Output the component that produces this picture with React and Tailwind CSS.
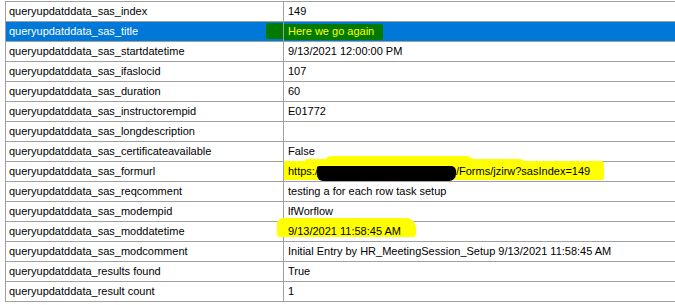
const rows = [
  ["queryupdatddata_sas_index", "149"],
  ["queryupdatddata_sas_title", "Here we go again", "selected"],
  ["queryupdatddata_sas_startdatetime", "9/13/2021 12:00:00 PM"],
  ["queryupdatddata_sas_ifaslocid", "107"],
  ["queryupdatddata_sas_duration", "60"],
  ["queryupdatddata_sas_instructorempid", "E01772"],
  ["queryupdatddata_sas_longdescription", ""],
  ["queryupdatddata_sas_certificateavailable", "False"],
  ["queryupdatddata_sas_formurl", "", "url"],
  ["queryupdatddata_sas_reqcomment", "testing a for each row task setup"],
  ["queryupdatddata_sas_modempid", "lfWorflow"],
  ["queryupdatddata_sas_moddatetime", "9/13/2021 11:58:45 AM", "marked"],
  ["queryupdatddata_sas_modcomment", "Initial Entry by HR_MeetingSession_Setup 9/13/2021 11:58:45 AM"],
  ["queryupdatddata_results found", "True"],
  ["queryupdatddata_result count", "1"],
];

function ValueCell({ value, kind }) {
  if (kind === "selected") {
    return (
      <div className="relative flex h-full items-center pl-[4px]">
        <div className="absolute left-0 top-[2px] h-[16px] w-[99px] rounded-r-[2px] bg-[#007a00]" />
        <span className="relative text-[#ffff00]">{value}</span>
      </div>
    );
  }
  if (kind === "url") {
    return (
      <div className="relative flex h-full items-center pl-[4px]">
        {/* highlighter stroke */}
        <div className="absolute left-0 top-[-1px] h-[19px] w-[320px] rounded-tr-[3px] rounded-br-[2px] bg-[#ffff00]" />
        <div className="absolute left-[40px] top-[-6px] h-[8px] w-[150px] rounded-t-[8px] bg-[#ffff00]" />
        <div className="absolute left-[20px] top-[-3px] h-[4px] w-[220px] rounded-t-[4px] bg-[#ffff00]" />
        <span className="relative">https:/</span>
        <span className="relative -ml-[1px] mt-[4px] h-[15px] w-[139px] rounded-bl-[6px] rounded-tl-[2px] rounded-tr-[5px] rounded-br-[7px] bg-black" />
        <span className="relative">/Forms/jzirw?sasIndex=149</span>
      </div>
    );
  }
  if (kind === "marked") {
    return (
      <div className="relative flex h-full items-center pl-[4px]">
        <div className="absolute left-[-7px] top-[-4px] h-[19px] w-[139px] rounded-tl-[6px] rounded-tr-[10px] rounded-br-[3px] rounded-bl-[2px] bg-[#ffff00]" />
        <span className="relative">{value}</span>
      </div>
    );
  }
  return <div className="flex h-full items-center pl-[4px]">{value}</div>;
}

export default function App() {
  return (
    <div
      className="h-[305px] w-[675px] overflow-hidden bg-white pl-[5px] pt-[1px] text-[11px] leading-none text-black"
      style={{ fontFamily: '"Liberation Sans", Arial, sans-serif' }}
    >
      <div className="border-b border-l border-[#a0a0a0]">
        {rows.map(([name, value, kind]) => {
          const selected = kind === "selected";
          return (
            <div
              key={name}
              className={`flex h-[20px] border-t border-[#a0a0a0] ${selected ? "bg-[#0078d7]" : "bg-white"}`}
            >
              <div className={`relative flex w-[277px] shrink-0 items-center pl-[3px] ${selected ? "text-white" : ""}`}>
                {selected && <div className="absolute right-0 top-[1px] h-[16px] w-[17px] rounded-l-[2px] bg-[#007a00]" />}
                <span className="relative">{name}</span>
              </div>
              <div className="w-[1px] shrink-0 bg-[#a0a0a0]" />
              <div className="grow">
                <ValueCell value={value} kind={kind} />
              </div>
            </div>
          );
        })}
      </div>
    </div>
  );
}
